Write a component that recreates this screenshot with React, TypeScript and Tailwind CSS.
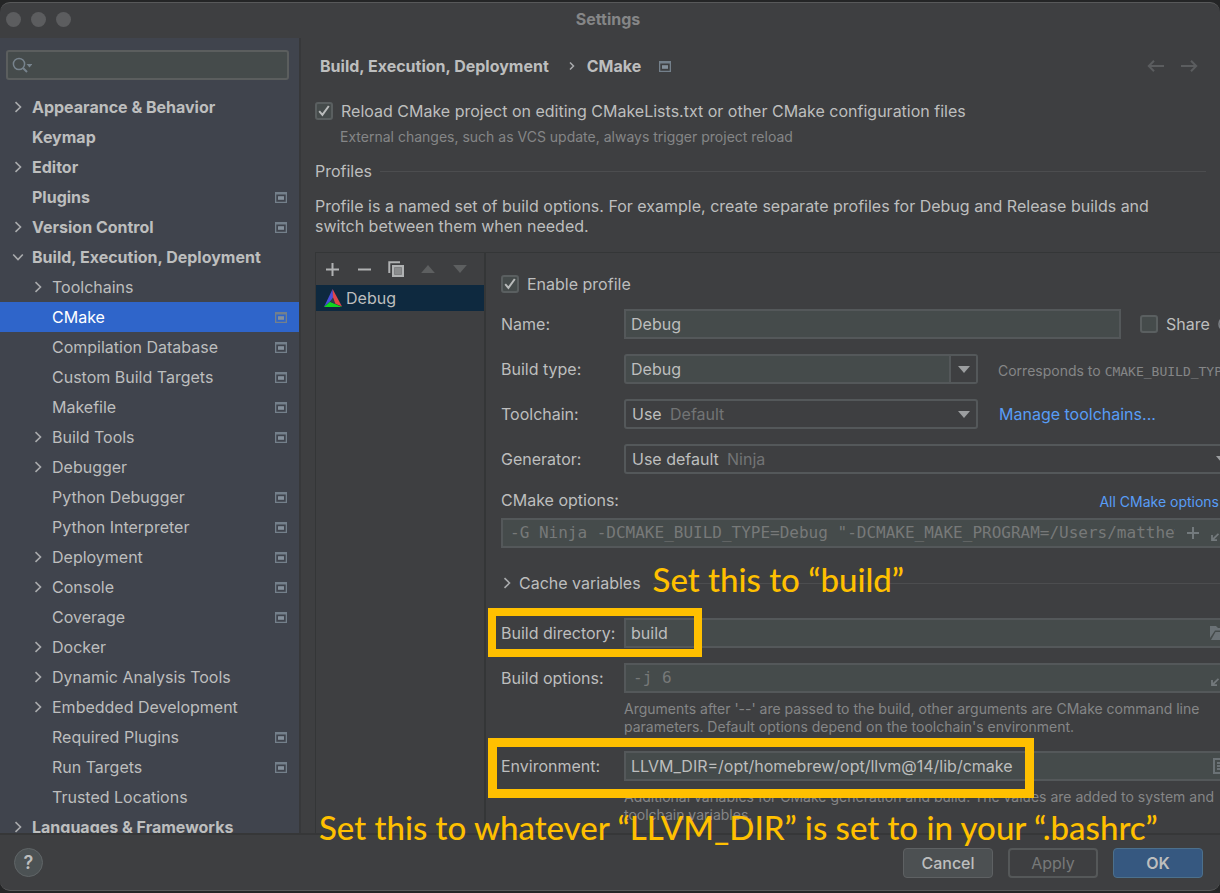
import React, { useId } from "react";

type TreeItem = {
  label: string;
  level: 0 | 1;
  arrow?: "right" | "down";
  project?: boolean;
  selected?: boolean;
};

const items: TreeItem[] = [
  { label: "Appearance & Behavior", level: 0, arrow: "right" },
  { label: "Keymap", level: 0 },
  { label: "Editor", level: 0, arrow: "right" },
  { label: "Plugins", level: 0, project: true },
  { label: "Version Control", level: 0, arrow: "right", project: true },
  { label: "Build, Execution, Deployment", level: 0, arrow: "down" },
  { label: "Toolchains", level: 1, arrow: "right" },
  { label: "CMake", level: 1, project: true, selected: true },
  { label: "Compilation Database", level: 1, project: true },
  { label: "Custom Build Targets", level: 1, project: true },
  { label: "Makefile", level: 1, project: true },
  { label: "Build Tools", level: 1, arrow: "right", project: true },
  { label: "Debugger", level: 1, arrow: "right" },
  { label: "Python Debugger", level: 1, project: true },
  { label: "Python Interpreter", level: 1, project: true },
  { label: "Deployment", level: 1, arrow: "right", project: true },
  { label: "Console", level: 1, arrow: "right", project: true },
  { label: "Coverage", level: 1, project: true },
  { label: "Docker", level: 1, arrow: "right" },
  { label: "Dynamic Analysis Tools", level: 1, arrow: "right" },
  { label: "Embedded Development", level: 1, arrow: "right" },
  { label: "Required Plugins", level: 1, project: true },
  { label: "Run Targets", level: 1, project: true },
  { label: "Trusted Locations", level: 1 },
  { label: "Languages & Frameworks", level: 0, arrow: "right" },
];

function ProjectIcon() {
  return (
    <svg className="h-[11px] w-3 shrink-0" viewBox="0 0 12 11" aria-hidden="true">
      <path d="M0 0h12v11H0z M1.3 2.6v7.1h9.4V2.6z" fill="#74808b" fillRule="evenodd" />
      <rect x="3" y="4.2" width="6" height="3.6" fill="#84909b" />
    </svg>
  );
}

function Chevron({ dir }: { dir: "right" | "down" }) {
  return (
    <svg className="size-3 shrink-0" viewBox="0 0 12 12" fill="none" stroke="#a9abad" strokeWidth="1.6" aria-hidden="true">
      <path d={dir === "right" ? "M3.5 1.2 8.5 6 3.5 10.8" : "M1.2 3.5 6 8.5 10.8 3.5"} />
    </svg>
  );
}

function Triangle({ className }: { className: string }) {
  return (
    <svg className={className} viewBox="0 0 12 7" aria-hidden="true">
      <path d="M0 0h12L6 7z" fill="currentColor" />
    </svg>
  );
}

function Check({ label, checked }: { label: string; checked?: boolean }) {
  return (
    <label className="flex items-center gap-2 whitespace-nowrap">
      <span className="grid size-[18px] place-items-center">
        <input
          type="checkbox"
          defaultChecked={checked}
          className="peer col-start-1 row-start-1 size-[18px] appearance-none rounded-[3px] border-2 border-[#5a5f60] bg-[#454b4b]"
        />
        <svg
          className="pointer-events-none invisible col-start-1 row-start-1 size-3 peer-checked:visible"
          viewBox="0 0 12 12"
          fill="none"
          stroke="#b9bbbb"
          strokeWidth="2"
          aria-hidden="true"
        >
          <path d="M1.2 6.2 4.4 9.8 10.8 1" />
        </svg>
      </span>
      {label}
    </label>
  );
}

function Row({ label, children }: { label: string; children: (id: string) => React.ReactNode }) {
  const id = useId();
  return (
    <div className="relative flex h-[30px] items-center">
      <label htmlFor={id} className="w-[123px] shrink-0 whitespace-nowrap">
        {label}
      </label>
      {children(id)}
    </div>
  );
}

function ExpandIcon() {
  return (
    <svg className="size-2 shrink-0" viewBox="0 0 8 8" fill="none" stroke="#73797c" strokeWidth="1.8" aria-hidden="true">
      <path d="M7.5.8 1.2 7M1 2v5.2h5" />
    </svg>
  );
}

const field = "h-[30px] border-2 border-[#54585a] bg-[#454b4b]";
const help = "text-[14px] leading-[18px] text-[#858687]";
const mono = "font-['DejaVu_Sans_Mono',monospace]";
const note = "text-[33px] leading-[42px] font-medium whitespace-nowrap text-[#ffc000] font-[Lato,sans-serif]";

function Sidebar() {
  return (
    <aside className="flex w-[301px] shrink-0 flex-col overflow-hidden border-r-2 border-[#37383a] bg-[#40444d] pt-3">
      <div className="mr-[10px] ml-[6px] flex h-[30px] shrink-0 items-center rounded-[3px] border-2 border-[#5b5e5e] bg-[#454b4b] pl-1">
        <svg className="h-4 w-5 shrink-0" viewBox="0 0 20 16" fill="none" stroke="#77838d" strokeWidth="1.5" aria-hidden="true">
          <circle cx="7" cy="7" r="5.6" />
          <path d="M11 11l4 4" strokeWidth="2" />
          <path d="M14.500 7h6l-3 3.400z" fill="#77838d" stroke="none" />
        </svg>
        <input type="search" aria-label="Search settings" className="min-w-0 flex-1 bg-transparent outline-none" />
      </div>
      <ul className="mt-3">
        {items.map((it) => (
          <li key={it.label}>
            <a
              href="#"
              className={[
                "flex h-[30px] items-center gap-2 pr-3",
                it.level === 0 ? "pl-3 font-bold" : "pl-8",
                it.selected ? "bg-[#2f65ca] text-white" : "",
              ].join(" ")}
            >
              {it.arrow ? <Chevron dir={it.arrow} /> : <span className="w-3" />}
              <span className="flex-1 whitespace-nowrap">{it.label}</span>
              {it.project && <ProjectIcon />}
            </a>
          </li>
        ))}
      </ul>
    </aside>
  );
}

function ProfileList() {
  return (
    <div className="w-[171px] shrink-0 border-r-2 border-l border-[#343637]">
      <div className="flex h-8 items-center gap-4 px-2 text-[#b0b2b3]">
        <button aria-label="Add" className="grid size-4 place-items-center">
          <svg className="size-[13px]" viewBox="0 0 13 13" fill="none" stroke="currentColor" strokeWidth="2" aria-hidden="true">
            <path d="M6.500 0v13M0 6.500h13" />
          </svg>
        </button>
        <button aria-label="Remove" className="grid size-4 place-items-center">
          <svg className="size-[13px]" viewBox="0 0 13 13" fill="none" stroke="currentColor" strokeWidth="2" aria-hidden="true">
            <path d="M0 6.500h13" />
          </svg>
        </button>
        <button aria-label="Copy" className="grid size-4 place-items-center">
          <svg className="size-4" viewBox="0 0 16 16" aria-hidden="true">
            <path d="M1.300 12V1.300H12" fill="none" stroke="currentColor" strokeWidth="2" />
            <path d="M4 4h12v12H4z" fill="currentColor" />
            <path d="M6.500 6.500h7v7h-7z" fill="#8a8c8d" stroke="#77797a" strokeWidth=".8" />
          </svg>
        </button>
        <button aria-label="Move up" disabled className="grid size-4 place-items-center text-[#5d5f60]">
          <Triangle className="h-2 w-[14px] rotate-180" />
        </button>
        <button aria-label="Move down" disabled className="grid size-4 place-items-center text-[#5d5f60]">
          <Triangle className="h-2 w-[14px]" />
        </button>
      </div>
      <button className="flex h-[26px] w-full items-center gap-1 bg-[#0e293f] pl-2">
        <svg className="h-[18px] w-[18px] shrink-0" viewBox="0 0 18 18" aria-hidden="true">
          <path d="M8.600 0 9.300 9.500 0 18z" fill="#4a50d8" />
          <path d="M8.600 0 18 17.500 10.500 14.500 9 9z" fill="#e0454a" />
          <path d="M0 18 6 12.800 18 18z" fill="#10d420" />
          <path d="M9 8.500 6 12.800l5.500 2.100z" fill="#303c48" />
        </svg>
        Debug
      </button>
    </div>
  );
}

function ProfileForm() {
  const optionsId = useId();
  return (
    <form className="min-w-0 flex-1 overflow-hidden pl-[15px]">
      <div className="w-[768px] pt-[21px]">
        <div className="mb-[15px] flex h-5 items-center">
          <Check label="Enable profile" checked />
        </div>
        <div className="flex flex-col gap-[15px]">
          <Row label="Name:">
            {(id) => (
              <>
                <input id={id} defaultValue="Debug" className={`${field} w-[497px] px-[5px]`} />
                <div className="ml-[19px] flex items-center gap-2">
                  <Check label="Share" />
                  <svg className="size-4" viewBox="0 0 16 16" fill="none" stroke="#7c8085" strokeWidth="1.600" aria-hidden="true">
                    <circle cx="8" cy="8" r="7" />
                    <path d="M6 6.500c0-3 4-3 4-.5 0 1.500-2 1.500-2 3.500M8 11v1.500" />
                  </svg>
                </div>
              </>
            )}
          </Row>
          <Row label="Build type:">
            {(id) => (
              <>
                <div className="relative flex">
                  <select id={id} className={`${field} w-[354px] appearance-none rounded-[3px] px-[5px]`}>
                    <option>Debug</option>
                    <option>Release</option>
                  </select>
                  <span className="pointer-events-none absolute inset-y-[2px] right-[2px] grid w-[27px] place-items-center border-l-2 border-[#54585a] bg-[#3e3f41] text-[#9c9ea0]">
                    <Triangle className="h-[7px] w-3" />
                  </span>
                </div>
                <span className={`${help} ml-5 pt-1 whitespace-nowrap`}>
                  Corresponds to <span className={`${mono} text-[13px]`}>CMAKE_BUILD_TYPE</span>
                </span>
              </>
            )}
          </Row>
          <Row label="Toolchain:">
            {(id) => (
              <>
                <div className="relative flex">
                  <select
                    id={id}
                    className="h-[30px] w-[354px] appearance-none rounded-[3px] border-2 border-[#54585a] bg-[#3e3f41] px-[6px]"
                  >
                    <option>Use</option>
                  </select>
                  <span className="pointer-events-none absolute inset-0 flex items-center justify-between pr-2 pl-[46px] text-[#727475]">
                    Default
                    <Triangle className="h-[7px] w-3 text-[#9c9ea0]" />
                  </span>
                </div>
                <a href="#" className="ml-[21px] whitespace-nowrap text-[#589df6]">
                  Manage toolchains...
                </a>
              </>
            )}
          </Row>
          <Row label="Generator:">
            {(id) => (
              <div className="relative flex">
                <select
                  id={id}
                  className="h-[30px] w-[612px] appearance-none rounded-[3px] border-2 border-[#54585a] bg-[#3e3f41] px-[6px]"
                >
                  <option>Use default</option>
                </select>
                <span className="pointer-events-none absolute inset-0 flex items-center justify-between pr-2 pl-[103px] text-[#727475]">
                  Ninja
                  <Triangle className="h-[7px] w-3 text-[#9c9ea0]" />
                </span>
              </div>
            )}
          </Row>
        </div>

        <div className="mt-4 flex h-5 items-center justify-between pr-[50px]">
          <label htmlFor={optionsId}>CMake options:</label>
          <a href="#" className="pt-1 text-[14px] text-[#589df6]">
            All CMake options
          </a>
        </div>
        <div className={`${field} mt-2 flex items-center`}>
          <input
            id={optionsId}
            placeholder={'-G Ninja -DCMAKE_BUILD_TYPE=Debug "-DCMAKE_MAKE_PROGRAM=/Users/matthew/bin/ninja"'}
            className={`${mono} mr-3 w-[672px] shrink-0 bg-transparent pl-[7px] placeholder:text-[#777979]`}
          />
          <button type="button" aria-label="Insert macro" className="text-[#737a7d]">
            <svg className="size-3" viewBox="0 0 12 12" fill="none" stroke="currentColor" strokeWidth="2" aria-hidden="true">
              <path d="M6 0v12M0 6h12" />
            </svg>
          </button>
          <button type="button" aria-label="Expand" className="mt-2 ml-3">
            <ExpandIcon />
          </button>
        </div>

        <div className="mt-[25px] mb-[25px] flex h-5 items-center">
          <button type="button" className="flex items-center gap-[6px] whitespace-nowrap">
            <Chevron dir="right" />
            Cache variables
          </button>
          <span className="relative ml-3 h-px flex-1 bg-[#4c4d4f]">
            <span className={`${note} absolute -top-[25px] left-0`}>Set this to “build”</span>
          </span>
        </div>

        <Row label="Build directory:">
          {(id) => (
            <>
              <div className={`${field} flex flex-1 items-center`}>
                <input id={id} defaultValue="build" className="w-[584px] bg-transparent px-[5px]" />
                <svg className="h-[14px] w-4" viewBox="0 0 16 14" fill="#6b7276" aria-hidden="true">
                  <path d="M0 0h6l2 2h6v2.500H5L0 12z" />
                  <path d="M5.500 6H16l-3.500 8H1z" />
                </svg>
              </div>
              <span className="pointer-events-none absolute -top-[10px] -left-[13px] h-[49px] w-[214px] border-8 border-[#ffc000]" />
            </>
          )}
        </Row>
        <div className="h-[15px]" />
        <Row label="Build options:">
          {(id) => (
            <div className={`${field} flex flex-1 items-center`}>
              <input
                id={id}
                placeholder="-j 6"
                className={`${mono} w-[585px] bg-transparent px-[7px] placeholder:text-[#777979]`}
              />
              <button type="button" aria-label="Expand" className="mt-2">
                <ExpandIcon />
              </button>
            </div>
          )}
        </Row>
        <p className={`${help} mt-[7px] mb-[15px] ml-[123px] w-[600px]`}>
          Arguments after '--' are passed to the build, other arguments are CMake command line
          parameters. Default options depend on the toolchain's environment.
        </p>
        <Row label="Environment:">
          {(id) => (
            <>
              <div className={`${field} flex flex-1 items-center`}>
                <input
                  id={id}
                  defaultValue="LLVM_DIR=/opt/homebrew/opt/llvm@14/lib/cmake"
                  className="w-[587px] bg-transparent px-[5px]"
                />
                <svg className="size-4" viewBox="0 0 16 16" fill="none" stroke="#6b7276" strokeWidth="2" aria-hidden="true">
                  <path d="M1 1h14v14H1zM4 5h8M4 8h8M4 11h8" />
                </svg>
              </div>
              <span className="pointer-events-none absolute -top-[13px] -left-[13px] z-10 h-[60px] w-[546px] border-[9px] border-[#ffc000]" />
            </>
          )}
        </Row>
        <p className={`${help} mt-[7px] ml-[123px] w-[600px]`}>
          Additional variables for CMake generation and build. The values are added to system and
          toolchain variables.
        </p>
      </div>
    </form>
  );
}

export default function App() {
  return (
    <div className="h-screen bg-[#242526] pt-[2px] pb-[2px] font-[Inter,sans-serif] text-[16px] leading-5 text-[#bdbebe]">
      <div className="relative flex h-full flex-col overflow-hidden rounded-[10px] border-y border-[#58595a] bg-[#3e3f41]">
        <header className="relative flex h-[35px] shrink-0 items-center justify-center pr-1 pb-[3px]">
          <div className="absolute left-[6px] flex gap-[10px]">
            <span className="size-[15px] rounded-full bg-[#5c5d5f]" />
            <span className="size-[15px] rounded-full bg-[#5c5d5f]" />
            <span className="size-[15px] rounded-full bg-[#5c5d5f]" />
          </div>
          <h1 className="font-bold text-[#858687]">Settings</h1>
        </header>

        <div className="flex min-h-0 flex-1">
          <Sidebar />
          <main className="flex min-w-0 flex-1 flex-col overflow-hidden pl-[14px]">
            <div className="mt-[18px] flex h-5 shrink-0 items-center pr-[22px] pl-[5px] font-bold">
              <span>Build, Execution, Deployment</span>
              <svg className="mr-3 ml-5 h-2 w-[6px]" viewBox="0 0 6 8" fill="none" stroke="#a9abad" strokeWidth="1.500" aria-hidden="true">
                <path d="M1 .5 4.500 4 1 7.500" />
              </svg>
              <span className="mr-[18px]">CMake</span>
              <ProjectIcon />
              <div className="ml-auto flex gap-[15px] text-[#5b5d5f]">
                <button aria-label="Back" disabled>
                  <svg className="h-3 w-[18px]" viewBox="0 0 18 12" fill="none" stroke="currentColor" strokeWidth="2" aria-hidden="true">
                    <path d="M17 6H2M7 .8 1.800 6 7 11.200" />
                  </svg>
                </button>
                <button aria-label="Forward" disabled>
                  <svg className="h-3 w-[18px]" viewBox="0 0 18 12" fill="none" stroke="currentColor" strokeWidth="2" aria-hidden="true">
                    <path d="M1 6h15M11 .8 16.200 6 11 11.200" />
                  </svg>
                </button>
              </div>
            </div>
            <div className="mt-[25px] flex h-5 shrink-0 items-center">
              <Check label="Reload CMake project on editing CMakeLists.txt or other CMake configuration files" checked />
            </div>
            <p className={`${help} mt-[7px] ml-[25px]`}>
              External changes, such as VCS update, always trigger project reload
            </p>
            <div className="mt-[15px] flex h-5 shrink-0 items-center gap-2 pr-[14px]">
              <h2>Profiles</h2>
              <span className="h-px flex-1 bg-[#4c4d4f]" />
            </div>
            <p className="mt-[15px] mb-4 max-w-[850px]">
              Profile is a named set of build options. For example, create separate profiles for Debug and Release builds
              and switch between them when needed.
            </p>
            <div className="flex min-h-0 flex-1 overflow-hidden border-t border-[#343637]">
              <ProfileList />
              <ProfileForm />
            </div>
          </main>
        </div>

        <footer className="relative flex h-[57px] shrink-0 items-center gap-[15px] border-t-2 border-[#363738] pr-[17px] pl-[14px]">
          <span className={`${note} pointer-events-none absolute -top-[29px] left-[319px]`}>
            Set this to whatever “LLVM_DIR” is set to in your “.bashrc”
          </span>
          <button aria-label="Help" className="mr-auto size-[29px] rounded-full border border-[#606567] bg-[#4c5254] text-[18px] font-semibold">
            ?
          </button>
          <button className="h-[30px] w-[90px] rounded-[4px] border border-[#5e6163] bg-[#4c5052] font-medium">Cancel</button>
          <button disabled className="h-[30px] w-[90px] rounded-[4px] border-2 border-[#555859] text-[#777979]">
            Apply
          </button>
          <button className="h-[30px] w-[90px] rounded-[4px] border border-[#4c708c] bg-[#365880] font-semibold">OK</button>
        </footer>
      </div>
    </div>
  );
}
